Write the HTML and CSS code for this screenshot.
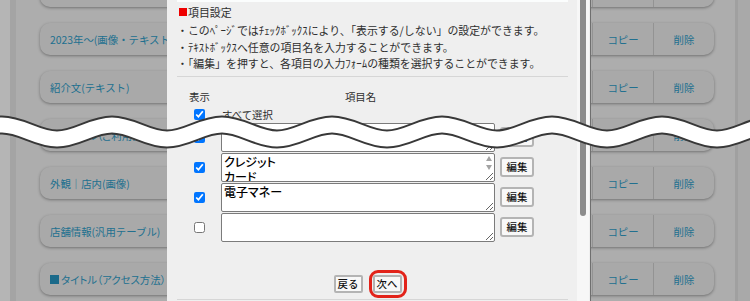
FILE: index.html
```html
<!DOCTYPE html>
<html lang="ja">
<head>
<meta charset="utf-8">
<title>項目設定</title>
<link rel="stylesheet" href="styles.css">
</head>
<body>
<div class="page">
  <div class="rail-a"></div>
  <div class="rail-b"></div>
  <main class="main">
    <ul class="cards">
      <li class="card"><span class="label"></span><span class="act"></span><span class="act"></span></li>
      <li class="card"><span class="label">2023年～(画像・テキスト)</span><span class="act">コピー</span><span class="act">削除</span></li>
      <li class="card"><span class="label">紹介文(テキスト)</span><span class="act">コピー</span><span class="act">削除</span></li>
      <li class="card"><span class="label tight"><span class="sq"></span>タイトル（ご利用ガイド）</span><span class="act">コピー</span><span class="act">削除</span></li>
      <li class="card"><span class="label">外観｜店内(画像)</span><span class="act">コピー</span><span class="act">削除</span></li>
      <li class="card"><span class="label">店舗情報(汎用テーブル)</span><span class="act">コピー</span><span class="act">削除</span></li>
      <li class="card"><span class="label tight"><span class="sq"></span>タイトル（アクセス方法）</span><span class="act">コピー</span><span class="act">削除</span></li>
    </ul>
  </main>
  <div class="rail-c"></div>
</div>

<section class="modal">
  <div class="modal-body">
    <div class="topbar"></div>
    <h2 class="title"><span class="mark"></span>項目設定</h2>
    <ul class="notes">
      <li>・このﾍﾟｰｼﾞではﾁｪｯｸﾎﾞｯｸｽにより、「表示する/しない」の設定ができます。</li>
      <li>・ﾃｷｽﾄﾎﾞｯｸｽへ任意の項目名を入力することができます。</li>
      <li>・「編集」を押すと、各項目の入力ﾌｫｰﾑの種類を選択することができます。</li>
    </ul>
    <hr class="rule">
    <div class="items">
      <div class="head-show">表示</div>
      <div class="head-name">項目名</div>
      <div></div>

      <div class="cell-check"><input type="checkbox" checked></div>
      <div class="all">すべて選択</div>
      <div></div>

      <div class="cell-check"><input type="checkbox" checked></div>
      <div class="cell-text"><textarea class="field"></textarea></div>
      <div class="cell-btn"><button class="edit">編集</button></div>

      <div class="cell-check"><input type="checkbox" checked></div>
      <div class="cell-text"><textarea class="field">クレジット
カード</textarea><span class="arr up"></span><span class="arr down"></span></div>
      <div class="cell-btn"><button class="edit">編集</button></div>

      <div class="cell-check"><input type="checkbox" checked></div>
      <div class="cell-text"><textarea class="field">電子マネー</textarea></div>
      <div class="cell-btn"><button class="edit">編集</button></div>

      <div class="cell-check"><input type="checkbox"></div>
      <div class="cell-text"><textarea class="field"></textarea></div>
      <div class="cell-btn"><button class="edit">編集</button></div>
    </div>
    <div class="actions">
      <button class="nav">戻る</button>
      <span class="ring-wrap"><button class="nav">次へ</button><span class="ring"></span></span>
    </div>
    <hr class="rule bottom">
  </div>
  <div class="track"><div class="thumb"></div></div>
</section>

<svg class="wave" width="750" height="301" viewBox="0 0 750 301" aria-hidden="true">
  <path class="wave-edge" d="M-53 139 c20 0 35 -14 55 -14 s35 14 55 14 s35 -14 55 -14 s35 14 55 14 s35 -14 55 -14 s35 14 55 14 s35 -14 55 -14 s35 14 55 14 s35 -14 55 -14 s35 14 55 14 s35 -14 55 -14 s35 14 55 14 s35 -14 55 -14 s35 14 55 14 s35 -14 55 -14"/>
  <path class="wave-fill" d="M-53 139 c20 0 35 -14 55 -14 s35 14 55 14 s35 -14 55 -14 s35 14 55 14 s35 -14 55 -14 s35 14 55 14 s35 -14 55 -14 s35 14 55 14 s35 -14 55 -14 s35 14 55 14 s35 -14 55 -14 s35 14 55 14 s35 -14 55 -14 s35 14 55 14 s35 -14 55 -14"/>
</svg>
</body>
</html>
```

FILE: styles.css
```css
* { box-sizing: border-box; }

html, body {
  margin: 0;
  padding: 0;
}

body {
  width: 750px;
  height: 301px;
  overflow: hidden;
  position: relative;
  font-family: "Noto Sans CJK JP", "Noto Sans", sans-serif;
  background: #adadad;
}

/* ---------- dimmed page behind the dialog ---------- */
.page {
  display: flex;
  height: 301px;
  overflow: hidden;
  background: #adadad;
}

.rail-a { width: 10px; background: #b5b5b5; flex: none; }
.rail-b { width: 6px; background: #a4a4a4; flex: none; }
.rail-c { width: 15px; background: #a9a9a9; border-left: 3px solid #a0a0a0; flex: none; }

.main {
  flex: 1;
  padding: 0 21px 0 24px;
}

.cards {
  list-style: none;
  margin: -25px 0 0;
  padding: 0;
  display: flex;
  flex-direction: column;
  gap: 16px;
}

.card {
  display: flex;
  height: 32px;
  border-radius: 10px;
  background: #a9a9a9;
  box-shadow: 0 1px 3px rgba(0, 0, 0, 0.35);
  color: #21708f;
  font-size: 10.4px;
  align-items: stretch;
}

.label {
  flex: 1;
  display: flex;
  align-items: center;
  padding-left: 10px;
}

.label.tight {
  font-feature-settings: "palt";
}

.sq {
  display: inline-block;
  width: 9px;
  height: 9px;
  background: #1b6a8a;
  margin-right: 2px;
}

.act {
  width: 61px;
  flex: none;
  display: flex;
  align-items: center;
  justify-content: center;
  border-left: 1px solid #939393;
}

/* ---------- dialog ---------- */
.modal {
  position: absolute;
  left: 167px;
  top: 0;
  width: 424px;
  height: 301px;
  display: flex;
  background: #efefef;
  border-right: 1px solid #6f6f6f;
  color: #2e2e2e;
  font-size: 10.4px;
}

.modal-body {
  width: 410px;
  flex: none;
  padding: 0 9px 0 10px;
}

.topbar {
  height: 2px;
  background: #fbfdfd;
}

.title {
  margin: 2px 0 2px;
  font-size: 10.9px;
  font-weight: normal;
  line-height: 16px;
  height: 16px;
  display: flex;
  align-items: center;
}

.mark {
  display: inline-block;
  width: 8px;
  height: 8px;
  background: #ee0000;
  margin: 0 1px 0 2px;
}

.notes {
  list-style: none;
  margin: 0;
  padding: 0;
  font-size: 10.9px;
  line-height: 16.5px;
}

.rule {
  margin: 4px 0 0;
  border: 0;
  border-top: 1px solid #d6d6d6;
  height: 0;
}

.rule.bottom {
  margin-top: 5px;
}

.items {
  margin-top: 11px;
  display: grid;
  grid-template-columns: 44px 274px 39px;
  grid-template-rows: 18px 15px 29px 29px 29px 29px;
  row-gap: 1px;
  align-items: center;
}

.head-show,
.head-name {
  text-align: center;
  line-height: 18px;
}

.head-show { padding-left: 1px; }
.head-name { padding-left: 5px; }

.all {
  padding-left: 1px;
  line-height: 15px;
}

.cell-check {
  display: flex;
  justify-content: center;
  align-items: center;
  padding-left: 1px;
}

.cell-check input {
  margin: 0;
  width: 11px;
  height: 11px;
}

.cell-text {
  position: relative;
  height: 29px;
}

.field {
  display: block;
  width: 274px;
  height: 29px;
  margin: 0;
  padding: 0 2px 1px;
  border: 1px solid #7b7b7b;
  border-radius: 2px;
  background: #fff;
  font-family: "Noto Sans CJK JP", sans-serif;
  font-size: 12px;
  font-weight: 500;
  line-height: 15px;
  font-feature-settings: "palt";
  color: #000;
  overflow: hidden;
}

.arr {
  position: absolute;
  right: 3px;
  width: 0;
  height: 0;
  border-left: 3.5px solid transparent;
  border-right: 3.5px solid transparent;
}

.arr.up { top: 3px; border-bottom: 5px solid #a3a3a3; }
.arr.down { top: 12px; border-top: 5px solid #a3a3a3; }

.cell-btn {
  display: flex;
  align-items: center;
  padding-left: 5px;
}

.edit {
  width: 34px;
  height: 20px;
  margin: 0;
  padding: 0;
  border: 2px solid #b4b4b4;
  border-radius: 3px;
  background: #f8f8f8;
  font-family: "Noto Sans CJK JP", sans-serif;
  font-size: 10.4px;
  font-weight: 500;
  line-height: 16px;
  color: #111;
}

.actions {
  margin-top: 33px;
  height: 19px;
  display: flex;
  justify-content: center;
  align-items: center;
  gap: 10px;
  padding-right: 10px;
}

.nav {
  width: 29px;
  height: 18px;
  margin: 0;
  padding: 0;
  border: 2px solid #b4b4b4;
  border-radius: 2px;
  background: #f8f8f8;
  font-family: "Noto Sans CJK JP", sans-serif;
  font-size: 10.4px;
  font-weight: 500;
  line-height: 14px;
  color: #111;
}

.ring-wrap {
  position: relative;
  display: flex;
}

.ring {
  position: absolute;
  left: -4px;
  right: -5px;
  top: -5px;
  bottom: -5px;
  border: 3px solid #e2231a;
  border-radius: 9px;
}

.track {
  width: 12px;
  flex: none;
  background: #f7f7f7;
  padding: 0 3px 0 2.5px;
}

.thumb {
  height: 216px;
  background: #8c8c8c;
  border-radius: 0 0 4px 4px;
}

/* ---------- cut mark ---------- */
.wave {
  position: absolute;
  left: 0;
  top: 0;
  pointer-events: none;
}

.wave-edge {
  fill: none;
  stroke: #383838;
  stroke-width: 19;
}

.wave-fill {
  fill: none;
  stroke: #ffffff;
  stroke-width: 15;
}
```
